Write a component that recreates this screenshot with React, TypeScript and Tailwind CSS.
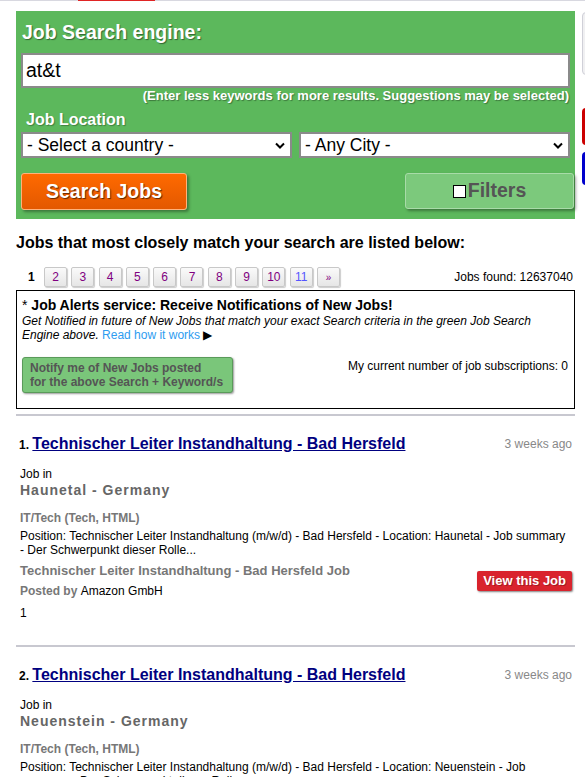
import React from "react";

const pages = ["2", "3", "4", "5", "6", "7", "8", "9", "10", "11", "»"];

type Job = {
  n: number;
  city: string;
  summary: string;
};

const jobs: Job[] = [
  {
    n: 1,
    city: "Haunetal - Germany",
    summary:
      "Position: Technischer Leiter Instandhaltung (m/w/d) - Bad Hersfeld - Location: Haunetal - Job summary - Der Schwerpunkt dieser Rolle...",
  },
  {
    n: 2,
    city: "Neuenstein - Germany",
    summary:
      "Position: Technischer Leiter Instandhaltung (m/w/d) - Bad Hersfeld - Location: Neuenstein - Job summary - Der Schwerpunkt dieser Rolle...",
  },
];

function JobItem({ job }: { job: Job }) {
  return (
    <div className="border-b-2 border-[#c8c8d0] pt-[18px] pb-[24px] pl-[3px] pr-[3px]">
      <div className="flex items-start justify-between">
        <div className="text-[16px] font-bold leading-[20px]">
          <span className="text-[12px] text-black">{job.n}. </span>
          <a href="#" className="text-[#000080] underline">
            Technischer Leiter Instandhaltung - Bad Hersfeld
          </a>
        </div>
        <span className="text-[12px] text-[#888] leading-[20px]">3 weeks ago</span>
      </div>
      <div className="pl-[1px] mt-[12px] text-[12px] leading-[15px] text-black">Job in</div>
      <div className="pl-[1px] text-[14px] font-bold text-[#666] tracking-[1px] leading-[17px]">
        {job.city}
      </div>
      <div className="pl-[1px] mt-[12px] text-[12px] font-bold text-[#777] leading-[15px]">
        IT/Tech (Tech, HTML)
      </div>
      <div className="pl-[1px] pr-[6px] text-[12px] text-black leading-[14px] mt-[3px]">{job.summary}</div>
      <div className="pl-[1px] flex items-start justify-between mt-[5px]">
        <div>
          <div className="text-[13px] font-bold text-[#777] leading-[17px]">
            Technischer Leiter Instandhaltung - Bad Hersfeld Job
          </div>
          <div className="mt-[5px] text-[12px] leading-[15px]">
            <span className="font-bold text-[#777]">Posted by </span>
            <span className="text-black">Amazon GmbH</span>
          </div>
          <div className="mt-[7px] text-[12px] leading-[15px] text-black">1</div>
        </div>
        <a
          href="#"
          className="mt-[9px] bg-[#d9232d] text-white font-bold text-[13px] leading-[20px] px-[6px] rounded-[2px] shadow-[1px_1px_2px_rgba(0,0,0,0.5)] [text-shadow:1px_1px_0_rgba(0,0,0,0.25)]"
        >
          View this Job
        </a>
      </div>
    </div>
  );
}

function FakeSelect({ label, width }: { label: string; width: string }) {
  return (
    <div className={"relative h-[26px] border-2 border-[#8a8a8a] bg-white " + width}>
      <span className="absolute left-[4px] top-[1px] text-[17.5px] leading-[20px] text-black">{label}</span>
      <svg className="absolute right-[5px] top-[8px]" width="10" height="7" viewBox="0 0 10 7">
        <path d="M1 1.5 L5 5.5 L9 1.5" stroke="#000" strokeWidth="2" fill="none" />
      </svg>
    </div>
  );
}

export default function App() {
  return (
    <div className="relative w-[585px] min-h-[777px] bg-white font-['Liberation_Sans',Arial,sans-serif] overflow-hidden">
      {/* top strip */}
      <div className="h-[1px] bg-[#d8d8e0] flex">
        <div className="ml-[78px] w-[77px] bg-[#e02424]" />
      </div>

      {/* clipped side widgets */}
      <div className="absolute left-[582px] top-[12px] w-[20px] h-[63px] rounded-[4px] bg-[#f0f0f2] border border-[#d0d0d8]" />
      <div className="absolute left-[582px] top-[108px] w-[20px] h-[37px] rounded-[4px] bg-[#cc0000]" />
      <div className="absolute left-[582px] top-[152px] w-[20px] h-[33px] rounded-[4px] bg-[#0000cc]" />

      <div className="ml-[16px] w-[559px]">
        {/* search panel */}
        <div className="mt-[10px] bg-[#5cb85c] px-[5px] pt-[9px] pb-[9px]">
          <div className="pl-[1px] text-[19.5px] font-bold text-white leading-[24px] [text-shadow:1px_1px_1px_rgba(0,0,0,0.45)]">
            Job Search engine:
          </div>
          <input
            defaultValue="at&t"
            className="mt-[9px] block w-[549px] h-[35px] border-2 border-[#8a8a8a] bg-white px-[3px] text-[19.5px] text-black outline-none font-['Liberation_Sans',Arial,sans-serif]"
          />
          <div className="text-right pr-[1px] text-[13px] font-bold text-white leading-[16px] [text-shadow:1px_1px_1px_rgba(0,0,0,0.35)]">
            (Enter less keywords for more results. Suggestions may be selected)
          </div>
          <div className="mt-[6px] pl-[5px] text-[16px] font-bold text-white leading-[20px] [text-shadow:1px_1px_1px_rgba(0,0,0,0.3)]">
            Job Location
          </div>
          <div className="flex gap-[7px] mt-[2px]">
            <FakeSelect label="- Select a country -" width="w-[271px]" />
            <FakeSelect label="- Any City -" width="w-[271px]" />
          </div>
          <div className="flex justify-between items-start mt-[15px]">
            <button className="w-[166px] h-[37px] rounded-[3px] border border-[#ffb27a] bg-gradient-to-b from-[#ff6a00] to-[#e35800] text-white text-[19.5px] font-bold [text-shadow:1px_1px_1px_rgba(0,0,0,0.6)] shadow-[2px_2px_3px_rgba(0,0,0,0.35)]">
              Search Jobs
            </button>
            <button className="w-[169px] h-[36px] mr-[-4px] rounded-[3px] border border-[#a8dba8] bg-[#7cc97c] text-[#555] text-[19.5px] font-bold flex items-center justify-center shadow-[2px_2px_3px_rgba(0,0,0,0.35)]">
              <span className="inline-block w-[13px] h-[13px] bg-white border border-black mr-[2px]" />
              Filters
            </button>
          </div>
        </div>

        {/* results heading */}
        <h2 className="mt-[14px] text-[16px] font-bold text-black leading-[20px]">
          Jobs that most closely match your search are listed below:
        </h2>

        {/* pagination */}
        <div className="flex items-center justify-between mt-[14px]">
          <div className="flex items-center">
            <span className="w-[28px] pl-[12px] text-[12px] font-bold text-black">1</span>
            <div className="flex gap-[4.3px]">
              {pages.map((p) => (
                <a
                  key={p}
                  href="#"
                  className={
                    "w-[23px] h-[20px] flex items-center justify-center rounded-[2px] border border-[#c8c8c8] bg-gradient-to-b from-[#fafafa] to-[#e6e6e6] text-[12px] shadow-[1px_1px_1px_rgba(0,0,0,0.2)] " +
                    (p === "11" ? "text-[#5555ff]" : "text-[#800080]")
                  }
                >
                  {p === "»" ? <span className="text-[10px]">»</span> : p}
                </a>
              ))}
            </div>
          </div>
          <span className="text-[12px] text-black pr-[2px]">Jobs found: 12637040</span>
        </div>

        {/* job alerts */}
        <div className="mt-[3px] border border-black px-[5px] pt-[5px] pb-[15px]">
          <div className="text-[14px] font-bold text-black leading-[18px]">
            <span className="font-normal">* </span>Job Alerts service: Receive Notifications of New Jobs!
          </div>
          <div className="text-[12px] italic text-black leading-[14px]">
            Get Notified in future of New Jobs that match your exact Search criteria in the green Job Search
            Engine above.{" "}
            <a href="#" className="not-italic text-[#2e9cf0]">
              Read how it works
            </a>{" "}
            <span className="not-italic text-[12px]">▶</span>
          </div>
          <div className="flex justify-between items-start mt-[15px]">
            <button className="w-[211px] h-[36px] text-left pl-[7px] rounded-[3px] border border-[#5a9a5a] bg-[#7ac67a] text-[#555] text-[12px] font-bold leading-[14px] shadow-[1px_1px_2px_rgba(0,0,0,0.4)]">
              Notify me of New Jobs posted
              <br />
              for the above Search + Keyword/s
            </button>
            <span className="text-[12px] text-black pr-[1px]">My current number of job subscriptions: 0</span>
          </div>
        </div>

        <div className="mt-[5px] border-b-2 border-[#c8c8d0]" />

        {jobs.map((j) => (
          <JobItem key={j.n} job={j} />
        ))}
      </div>
    </div>
  );
}
